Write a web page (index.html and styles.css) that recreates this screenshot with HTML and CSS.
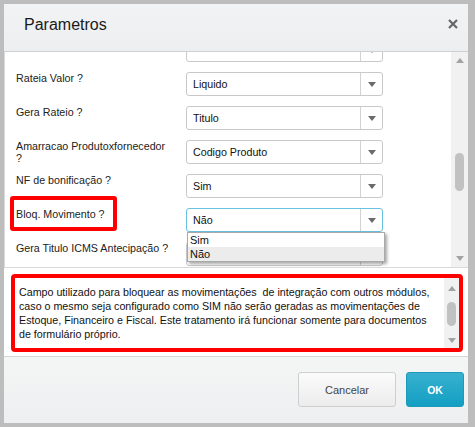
FILE: index.html
```html
<!DOCTYPE html>
<html lang="pt">
<head>
    <meta charset="UTF-8">
    <title>Parametros</title>
    <link rel="stylesheet" href="styles.css">
</head>
<body>
    <div class="dialog">
        <div class="dlg-header">
            <h2>Parametros</h2>
            <span class="close">
                <svg width="10" height="10" viewBox="0 0 10 10"><path d="M1 1L9 9M9 1L1 9" stroke="#666" stroke-width="2.2"/></svg>
            </span>
        </div>

        <div class="params">
            <div class="params-content">
                <div class="row">
                    <label></label>
                    <div class="select"><span class="value"></span><span class="arrow"></span></div>
                </div>
                <div class="row">
                    <label>Rateia Valor ?</label>
                    <div class="select"><span class="value">Liquido</span><span class="arrow"></span></div>
                </div>
                <div class="row">
                    <label>Gera Rateio ?</label>
                    <div class="select"><span class="value">Titulo</span><span class="arrow"></span></div>
                </div>
                <div class="row">
                    <label>Amarracao Produtoxfornecedor ?</label>
                    <div class="select"><span class="value">Codigo Produto</span><span class="arrow"></span></div>
                </div>
                <div class="row">
                    <label>NF de bonificação ?</label>
                    <div class="select"><span class="value">Sim</span><span class="arrow"></span></div>
                </div>
                <div class="row row-marked">
                    <label>Bloq. Movimento ?</label>
                    <span class="mark-label"></span>
                    <div class="select select-open">
                        <span class="value">Não</span><span class="arrow"></span>
                        <ul class="options">
                            <li>Sim</li>
                            <li class="hover">Não</li>
                        </ul>
                    </div>
                </div>
                <div class="row">
                    <label>Gera Titulo ICMS Antecipação ?</label>
                    <div class="select"><span class="value">Não</span><span class="arrow"></span></div>
                </div>
            </div>
            <div class="vscroll">
                <span class="up"></span>
                <div class="track"><div class="thumb thumb-params"></div></div>
                <span class="down"></span>
            </div>
        </div>

        <div class="help">
            <div class="help-mark">
                <div class="help-text">Campo utilizado para bloquear as movimentações&nbsp; de integração com outros módulos, caso o mesmo seja configurado como SIM não serão geradas as movimentações de Estoque, Financeiro e Fiscal. Este tratamento irá funcionar somente para documentos de formulário próprio.</div>
                <div class="vscroll vscroll-small">
                    <span class="up"></span>
                    <div class="track"><div class="thumb thumb-help"></div></div>
                    <span class="down"></span>
                </div>
            </div>
        </div>

        <div class="dlg-footer">
            <button class="btn btn-cancel">Cancelar</button>
            <button class="btn btn-ok">OK</button>
        </div>
    </div>
</body>
</html>
```

FILE: styles.css
```css
html {
    background-color: #bdbdbd;
}
body {
    margin: 0;
    padding: 4px 0 0 4px;
    font-family: "Liberation Sans", Arial, sans-serif;
    font-size: 10.7px;
    color: #222;
}
.dialog {
    width: 464px;
    height: 419px;
    display: flex;
    flex-direction: column;
    background-color: #fff;
}
.dialog > div {
    flex-shrink: 0;
    box-sizing: border-box;
}
.dlg-header {
    height: 48px;
    border-bottom: 1px solid #cfd0d1;
    background: linear-gradient(#f2f3f4, #eceeef);
    display: flex;
    align-items: center;
    justify-content: space-between;
    padding: 0 10px 6px 20px;
}
.dlg-header h2 {
    margin: 0;
    font-size: 16px;
    font-weight: normal;
    color: #1a1a1a;
}
.close {
    display: flex;
    margin-top: -1px;
}

/* form area */
.params {
    height: 216px;
    border-bottom: 1px solid #d9d9d9;
    border-left: 1px solid #d9d9d9;
    display: flex;
}
.params-content {
    flex: 1;
    overflow: hidden;
    padding-left: 11px;
}
.row {
    display: flex;
    height: 24px;
    margin-bottom: 10px;
    position: relative;
}
.row:first-child {
    margin-top: -14px;
}
.row label {
    width: 158px;
    margin-right: 12px;
    line-height: 12px;
    padding-top: 0;
}
.select {
    width: 197px;
    height: 24px;
    box-sizing: border-box;
    border: 1px solid #c9c9c9;
    border-radius: 3px;
    display: flex;
    position: relative;
    color: #111;
    background: #fff;
}
.select .value {
    flex: 1;
    line-height: 22px;
    padding-left: 6px;
}
.select .arrow {
    width: 21px;
    border-left: 1px solid #d2d2d2;
    display: flex;
    align-items: center;
    justify-content: center;
}
.select .arrow::after {
    content: "";
    border-left: 4px solid transparent;
    border-right: 4px solid transparent;
    border-top: 5px solid #6a6a6a;
}
.select-open {
    border-color: #66c2e0;
}
.options {
    position: absolute;
    left: 0;
    top: 23px;
    width: 196px;
    margin: 0;
    padding: 0;
    list-style: none;
    background: #fff;
    border: 1px solid #a9a9a9;
    box-shadow: 2px 2px 3px rgba(0, 0, 0, 0.35);
    font-size: 11px;
    z-index: 2;
}
.options li {
    line-height: 14px;
    padding-left: 2px;
}
.options li.hover {
    background-color: #ececec;
}
.mark-label {
    position: absolute;
    left: -6px;
    top: -12px;
    width: 107px;
    height: 35px;
    box-sizing: border-box;
    border: 4px solid #ff0000;
    border-radius: 3px;
}

/* scrollbars */
.vscroll {
    width: 17px;
    background-color: #f1f1f1;
    display: flex;
    flex-direction: column;
}
.vscroll .up,
.vscroll .down {
    height: 17px;
    display: flex;
    align-items: center;
    justify-content: center;
}
.vscroll .up::after {
    content: "";
    border-left: 4px solid transparent;
    border-right: 4px solid transparent;
    border-bottom: 5px solid #a3a3a3;
}
.vscroll .down::after {
    content: "";
    border-left: 4px solid transparent;
    border-right: 4px solid transparent;
    border-top: 5px solid #a3a3a3;
}
.track {
    flex: 1;
}
.thumb {
    width: 9px;
    margin-left: 4px;
    background-color: #c1c1c1;
    border-radius: 5px;
}
.thumb-params {
    margin-top: 84px;
    height: 38px;
}

/* help text */
.help {
    height: 88px;
    padding: 6px 0 4px 7px;
}
.help-mark {
    width: 452px;
    height: 78px;
    box-sizing: border-box;
    border: 4px solid #ff0000;
    border-radius: 4px;
    display: flex;
}
.help-text {
    flex: 1;
    padding: 7px 4px 0 4px;
    line-height: 14px;
    color: #111;
    overflow: hidden;
}
.vscroll-small {
    width: 15px;
    padding: 3px 0 1px;
}
.vscroll-small .up,
.vscroll-small .down {
    height: 14px;
}
.vscroll-small .thumb {
    margin-left: 3px;
    margin-top: 7px;
    height: 24px;
}

/* footer */
.dlg-footer {
    height: 67px;
    border-top: 1px solid #d6d7d8;
    background: linear-gradient(#f4f5f5, #eeeff0);
    display: flex;
    justify-content: flex-end;
    align-items: flex-start;
    padding: 15px 4px 0 0;
}
.btn {
    height: 35px;
    font-family: "Liberation Sans", Arial, sans-serif;
    font-size: 11px;
    border-radius: 3px;
    cursor: pointer;
}
.btn-cancel {
    width: 98px;
    margin-right: 10px;
    color: #444;
    border: 1px solid #cfcfcf;
    background: linear-gradient(#fbfbfb, #ececec);
}
.btn-ok {
    width: 58px;
    color: #fff;
    font-weight: bold;
    font-size: 10.5px;
    border: 1px solid #1b9abb;
    background: linear-gradient(#38b0cf, #139fc3);
}
```
